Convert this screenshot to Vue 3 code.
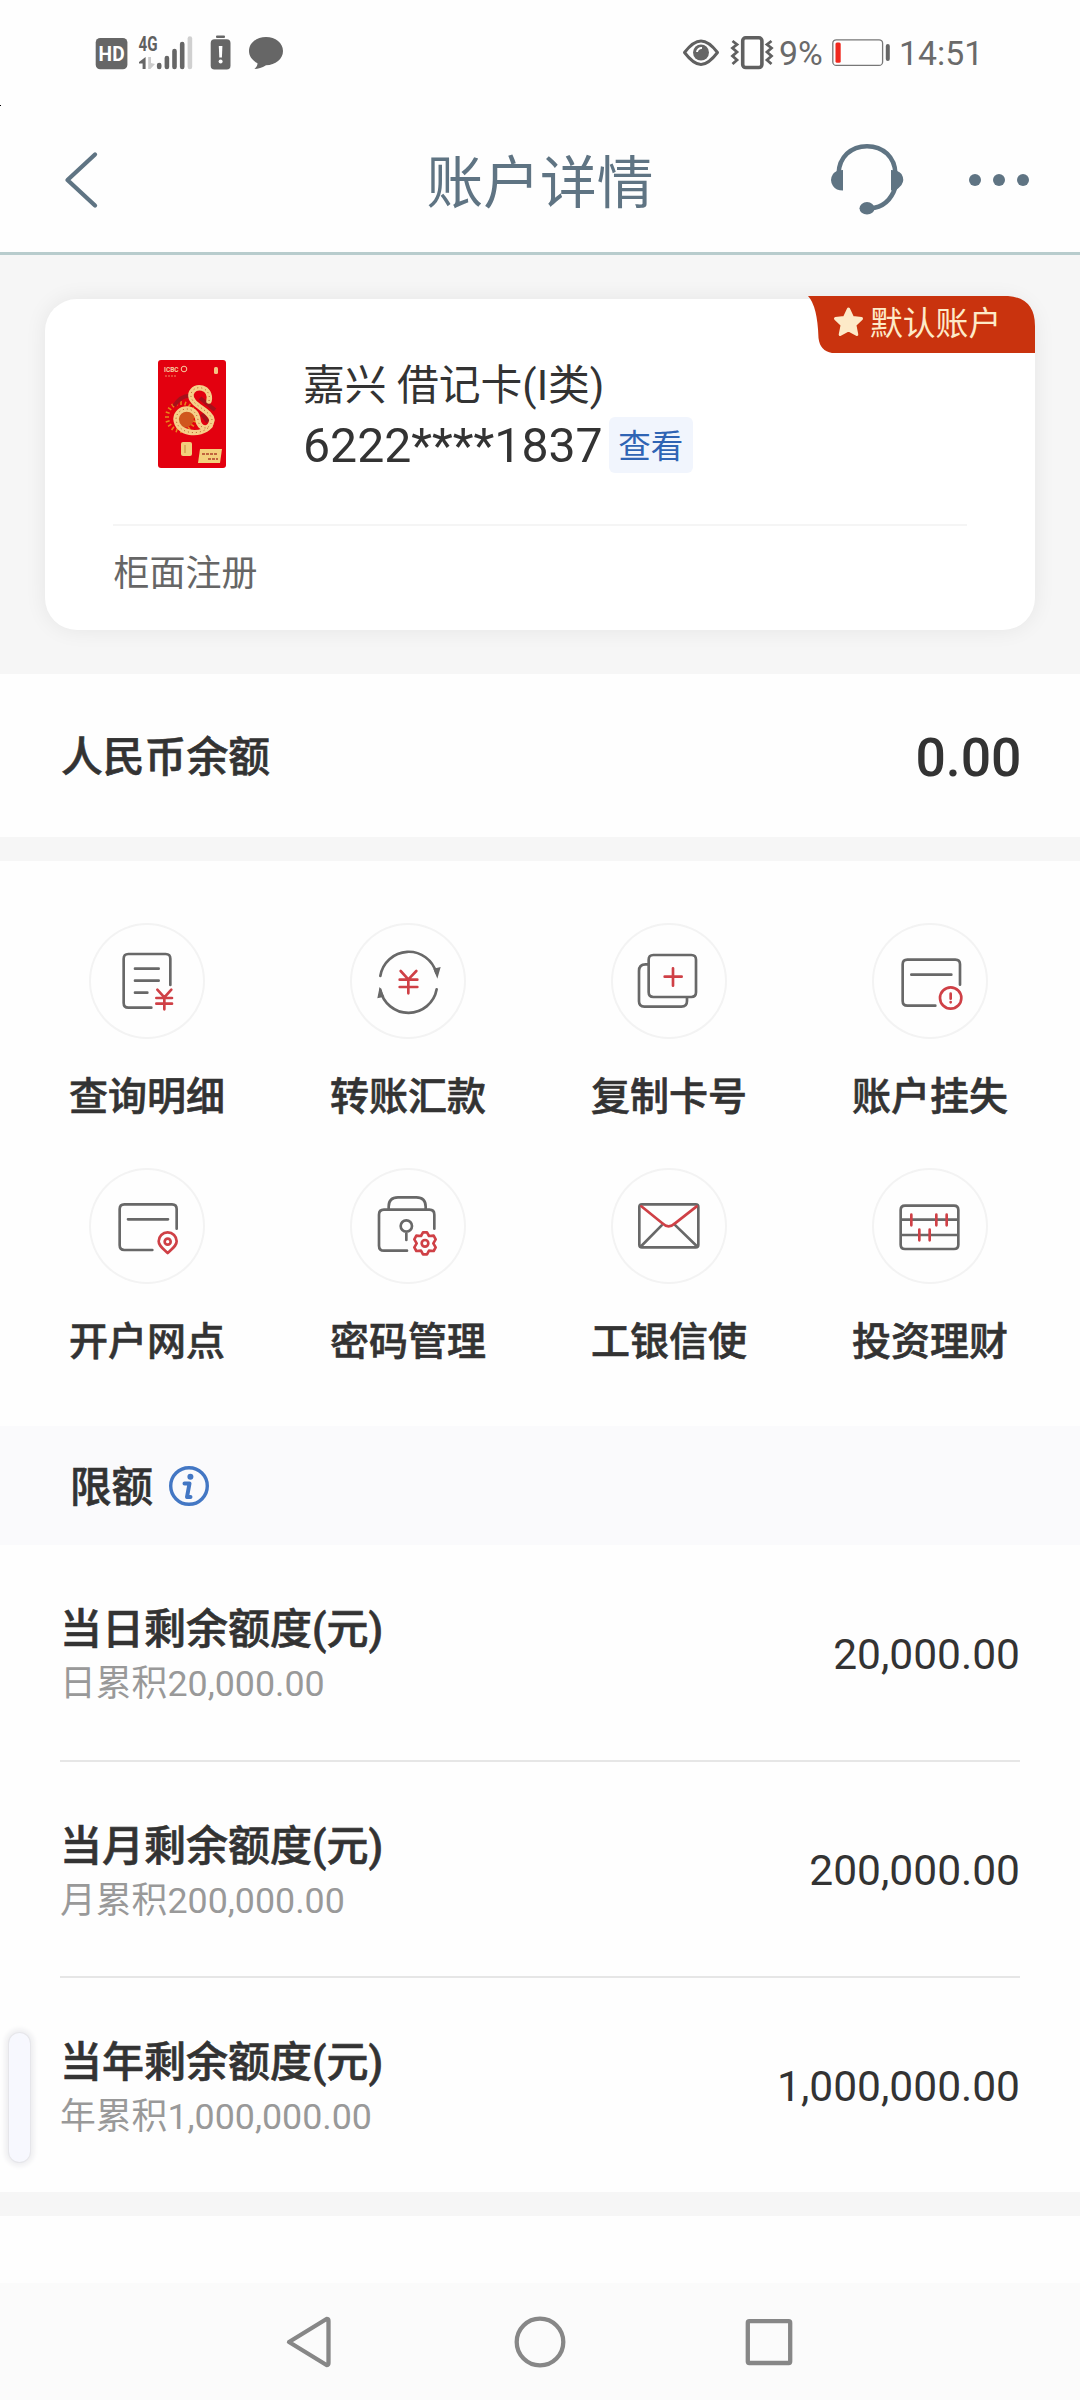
<script setup>
const actions = [
  {
    label: '查询明细', box: '148 68 348 348',
    dark: 'M392 254V175q0-14-14-14H266q-14 0-14 14V308q0 14 14 14H335M286 205H357M286 241H357M286 277H323',
    red: 'M353 268L374 291L395 268M350 293H397M350 310H397M374 291V327',
  },
  {
    label: '转账汇款', box: '931 68 348 348',
    dark: 'M1022 227A86 86 0 0 1 1190 218M1191 267A86 86 0 0 1 1022 268',
    fill: 'M1181 205L1203 200L1193 235ZM1020 259L1013 294L1034 289Z',
    red: 'M1083 212L1106 237L1130 212M1080 238H1133M1080 260H1133M1106 237V279',
  },
  {
    label: '复制卡号', box: '154 68 348 348',
    dark: 'M281 164H395q14 0 14 14V276q0 14-14 14H281q-14 0-14-14V178q0-14 14-14ZM267 192H258q-20 0-20 20V303q0 16 16 16H365q17 0 17-17V290',
    red: 'M315 229H366M340 204V256',
  },
  {
    label: '账户挂失', box: '937 68 348 348',
    dark: 'M1201 253V192q0-14-14-14H1043q-14 0-14 14V302q0 14 14 14H1127M1055 223H1175',
    red: 'M1205 293A32 32 0 1 1 1141 293A32 32 0 1 1 1205 293ZM1173 280V295M1173 305V306',
  },
  {
    label: '开户网点', box: '148 54 348 348',
    dark: 'M411 236V177q0-14-14-14H254q-14 0-14 14V286q0 14 14 14H338M265 208H385',
    red: 'M384 309C368 294 357 287 357 274A27 27 0 0 1 411 274C411 287 400 294 384 309ZM393 275A9 9 0 1 1 375 275A9 9 0 1 1 393 275Z',
  },
  {
    label: '密码管理', box: '931 54 348 348',
    dark: 'M1184 236V194q0-15-15-15H1033q-15 0-15 15V287q0 15 15 15H1102M1047 178V170q0-28 28-28H1130q28 0 28 28V178M1117 228A17 17 0 1 1 1083 228A17 17 0 1 1 1117 228ZM1100 245V270',
    red: 'M1150 247H1162L1168 258L1182 257L1188 268L1181 280L1188 292L1182 303L1168 302L1162 313H1150L1144 302L1130 303L1124 292L1131 280L1124 268L1130 257L1144 258ZM1166 280A10 10 0 1 1 1146 280A10 10 0 1 1 1166 280Z',
  },
  {
    label: '工银信使', box: '154 54 348 348',
    dark: 'M247 163H408q8 0 8 8V284q0 8-8 8H247q-8 0-8-8V171q0-8 8-8ZM245 288L306 226M345 224L411 288',
    red: 'M245 169L308 220Q327 238 346 220L411 169',
  },
  {
    label: '投资理财', box: '937 54 348 348',
    dark: 'M1036 167H1183q13 0 13 13V284q0 13-13 13H1036q-13 0-13-13V180q0-13 13-13ZM1023 209H1196M1023 255H1196',
    red: 'M1055 194V226M1130 194V226M1161 194V226M1079 239V271M1110 239V271',
  },
]

const limits = [
  { title: '当日剩余额度(元)', sub: '日累积20,000.00', value: '20,000.00' },
  { title: '当月剩余额度(元)', sub: '月累积200,000.00', value: '200,000.00' },
  { title: '当年剩余额度(元)', sub: '年累积1,000,000.00', value: '1,000,000.00' },
]

const rays = Array.from({ length: 20 }, (_, i) => i * 18)
</script>

<template>
  <div class="screen">
    <i class="speck"></i>
    <header class="status">
      <svg class="status-left" width="200" height="40" viewBox="90 32 200 40">
        <rect x="95.7" y="38" width="31.7" height="31.3" rx="4.5" fill="#666" />
        <text x="111.6" y="61.3" class="hd" text-anchor="middle" textLength="26" lengthAdjust="spacingAndGlyphs">HD</text>
        <text x="138.5" y="51" class="net" textLength="19" lengthAdjust="spacingAndGlyphs">4G</text>
        <path d="M145.6 57V69H142.6V63.5H139V62Z" fill="#666" />
        <path d="M148.2 57V69H150.4L155 64L151 63V57Z" fill="#ccc" />
        <g stroke="#666" stroke-width="4.6" stroke-linecap="round">
          <path d="M159.2 65V67M166.9 58V67M174.5 51V67M182.2 44V67" />
          <path d="M189.9 38.5V67" stroke="#d0d0d0" />
        </g>
        <rect x="210.7" y="39.3" width="19.8" height="30.2" rx="3.8" fill="#666" />
        <rect x="216" y="35.5" width="9" height="2.4" rx="1" fill="#666" />
        <path d="M218.8 46H222.4L221.9 57.5H219.3Z" fill="#fff" />
        <circle cx="220.6" cy="61.5" r="2" fill="#fff" />
        <path d="M266 37C275.500 37 283 43 283 51C283 59 275.500 65 266 65.300C262 68 258 69 254.500 69C256.500 67 257.500 65.500 257.500 63.200C252.500 60.500 249 56.500 249 51C249 43 256.500 37 266 37Z" fill="#666" />
      </svg>
      <svg width="94" height="40" viewBox="681 32 94 40" fill="none" stroke="#606060">
        <path d="M684.500 52.500C691 44 695.500 41 701 41S711 44 717.500 52.500C711 61 706.500 64.500 701 64.500S691 61 684.500 52.500Z" stroke-width="3" stroke-linejoin="round" />
        <circle cx="701" cy="52.500" r="8" fill="#666" stroke="none" />
        <path d="M697 52A4.500 4.500 0 0 1 702 48" stroke="#fff" stroke-width="2" />
        <rect x="742.700" y="37.800" width="19.200" height="29.700" rx="3" stroke-width="3.600" />
        <path d="M732.500 41L737 44.500L732.500 48L737 52L732.500 56L737 60L732.500 64M771.500 41L767 44.500L771.500 48L767 52L771.500 56L767 60L771.500 64" stroke-width="2.800" />
      </svg>
      <span class="status-text percent">9%</span>
      <svg class="battery" width="60" height="40" viewBox="831 32 60 40">
        <rect x="832.800" y="39.800" width="49.800" height="25.600" rx="3.500" fill="none" stroke="#777" stroke-width="1.300" />
        <rect x="835.500" y="42.500" width="5.200" height="20.300" rx="1.500" fill="#f0281e" />
        <rect x="885.800" y="44" width="4" height="17" rx="2" fill="#666" />
      </svg>
      <span class="status-text clock">14:51</span>
    </header>

    <nav class="title-bar">
      <svg class="back" width="40" height="64" viewBox="61 148 40 64" fill="none" stroke="#5f7483" stroke-width="4.300" stroke-linecap="round" stroke-linejoin="round">
        <path d="M95 154.500L67.500 180L95 205.500" />
      </svg>
      <h1>账户详情</h1>
      <div class="tools">
        <svg width="76" height="76" viewBox="829 142 76 76">
          <path d="M838.500 174C839 157 851 146.200 867 146.200S895 157 895.500 174M895.500 187Q889 207 870 208.500" fill="none" stroke="#5f7483" stroke-width="4.500" />
          <path d="M843 170V190.500Q836 190.500 833 186Q829 180 833 174Q836 170 843 170ZM891 170V190.500L896 190Q899 188 901.500 185Q905 180 901.500 174Q898 170 891 170Z" fill="#5f7483" />
          <ellipse cx="867" cy="208.300" rx="7.500" ry="6.200" fill="#5f7483" />
        </svg>
        <div class="more"><i></i><i></i><i></i></div>
      </div>
    </nav>

    <section class="card-zone">
      <article class="card">
        <div class="ribbon">
          <svg width="227" height="57" viewBox="0 0 227 57">
            <path d="M0 0H200Q227 2 227 30V57H24Q12 55 10.500 42Q9.500 10 0 0Z" fill="#c9330e" />
            <path d="M40.500 13L44.600 21.600L53.500 22.600L46.900 29L48.800 38.500L40.500 34L32.200 38.500L34.100 29L27.500 22.600L36.400 21.600Z" fill="#fdeac8" stroke="#fdeac8" stroke-width="3" stroke-linejoin="round" />
          </svg>
          <span>默认账户</span>
        </div>
        <div class="card-main">
          <svg class="card-art" width="68" height="108" viewBox="0 0 68 108">
            <rect width="68" height="108" rx="3" fill="#e3000f" />
            <g stroke="#e8871c" stroke-width="1.500">
              <path v-for="r in rays" :key="r" d="M23 45V41" :transform="`rotate(${r} 23 57)`" />
            </g>
            <circle cx="26" cy="58" r="10" fill="#d0561c" />
            <path d="M34 36Q24 34 16 46M42 38L57 50M44 54L50 62" stroke="#a5101a" stroke-width="4" fill="none" />
            <path d="M51 41C54 27 36 23 33 34C31 45 53 50 54 60C52 72 41 69 40 60C38 45 19 46 18 59C19 74 42 77 52 66" fill="none" stroke="#f5cf88" stroke-width="5.500" stroke-linecap="round" />
            <path d="M51 41C54 27 36 23 33 34C31 45 53 50 54 60C52 72 41 69 40 60C38 45 19 46 18 59C19 74 42 77 52 66" fill="none" stroke="#b5622a" stroke-width="1" stroke-dasharray="1 3" />
            <text x="6" y="11.500" class="art-text">ICBC</text>
            <circle cx="26" cy="9" r="2.800" fill="none" stroke="#f7cda0" />
            <path d="M7 16H19" stroke="#ee8a60" stroke-dasharray="2 1" />
            <rect x="56" y="7" width="4" height="7" rx="1.500" fill="#f3c483" />
            <rect x="23" y="82" width="11" height="14" rx="2" fill="#f3d07c" />
            <path d="M27 85V93" stroke="#c68a3a" />
            <path d="M42 89H64L62 103H40Z" fill="#f3d07c" />
            <path d="M44 94H59M50 99H60" stroke="#b0402a" stroke-width="1.500" stroke-dasharray="3 1" />
          </svg>
          <div class="card-info">
            <div class="card-name">嘉兴 借记卡(I类)</div>
            <div class="card-number"><span>6222****1837</span><button>查看</button></div>
          </div>
        </div>
        <div class="card-foot">柜面注册</div>
      </article>
    </section>

    <section class="balance">
      <span>人民币余额</span>
      <strong>0.00</strong>
    </section>

    <section class="actions">
      <div v-for="a in actions" :key="a.label" class="action">
        <div class="bubble">
          <svg width="116" height="116" :viewBox="a.box" fill="none" stroke-width="8" stroke-linecap="round" stroke-linejoin="round">
            <path :d="a.dark" stroke="#686868" />
            <path v-if="a.fill" :d="a.fill" fill="#686868" />
            <path :d="a.red" stroke="#cf4046" />
          </svg>
        </div>
        <span>{{ a.label }}</span>
      </div>
    </section>

    <section class="limit-head">
      <span>限额</span>
      <svg width="42" height="42" viewBox="0 0 42 42">
        <circle cx="21" cy="21" r="18.300" fill="none" stroke="#4377c4" stroke-width="3.400" />
        <circle cx="22.400" cy="11.700" r="3" fill="#4377c4" />
        <path d="M16.500 18.500H21.500L19 32H22.500" fill="none" stroke="#4377c4" stroke-width="4" stroke-linecap="round" stroke-linejoin="round" />
      </svg>
    </section>

    <section class="limits">
      <div v-for="l in limits" :key="l.title" class="limit">
        <div>
          <div class="limit-title">{{ l.title }}</div>
          <div class="limit-sub">{{ l.sub }}</div>
        </div>
        <div class="limit-value">{{ l.value }}</div>
      </div>
    </section>

    <div class="blank"></div>

    <footer class="system-nav">
      <svg width="52" height="56" viewBox="282 2314 52 56" fill="none" stroke="#878787" stroke-width="4.300" stroke-linejoin="round">
        <path d="M289 2342L326.500 2319Q328.500 2319 328.500 2321V2363Q328.500 2365 326.500 2365Z" />
      </svg>
      <svg width="52" height="56" viewBox="514 2314 52 56" fill="none" stroke="#878787" stroke-width="4.300">
        <circle cx="540" cy="2342" r="23.300" />
      </svg>
      <svg width="52" height="56" viewBox="743 2314 52 56" fill="none" stroke="#878787" stroke-width="4.300">
        <rect x="747.800" y="2321.200" width="42.400" height="41.800" rx="1.500" />
      </svg>
    </footer>

    <i class="edge-handle"></i>
  </div>
</template>

<style>
html,
body {
  margin: 0;
  background: #fefefe;
}
</style>

<style scoped>
.screen {
  position: relative;
  display: flex;
  flex-direction: column;
  width: 1080px;
  height: 2400px;
  overflow: hidden;
  background: #fefefe;
  color: #333;
  font-family: Roboto, "Noto Sans CJK SC", sans-serif;
}
.speck {
  position: absolute;
  left: 0;
  top: 105px;
  width: 1px;
  height: 1px;
  background: #000;
}
.status {
  display: flex;
  align-items: center;
  height: 104px;
  padding: 0 0 0 90px;
  box-sizing: border-box;
}
.status-left {
  margin-right: 391px;
}
.hd {
  font: 700 20.5px Roboto, sans-serif;
  fill: #fff;
}
.net {
  font: 700 20px Roboto, sans-serif;
  fill: #606060;
}
.status-text {
  color: #6a6a6a;
  font-size: 33.800px;
  line-height: 40px;
  margin-top: 4px;
}
.percent {
  width: 52px;
  margin-left: 4px;
}
.clock {
  margin-left: 8px;
}
.title-bar {
  display: flex;
  align-items: center;
  justify-content: space-between;
  height: 151px;
  box-sizing: border-box;
  padding: 4px 51px 0 61px;
  border-bottom: 3px solid #b8cccd;
}
.title-bar h1 {
  margin: 8px 0 0 150px;
  font-size: 56.700px;
  font-weight: 400;
  line-height: 80px;
  color: #5f7483;
}
.tools {
  display: flex;
  align-items: center;
  gap: 64px;
}
.more {
  display: flex;
  gap: 12px;
}
.more i {
  width: 12px;
  height: 12px;
  border-radius: 50%;
  background: #5f7483;
}
.card-zone {
  height: 419px;
  box-sizing: border-box;
  padding: 44px 45px 0 44.500px;
  background: #f6f6f6;
}
.card {
  position: relative;
  height: 331px;
  border-radius: 32px;
  background: #fff;
  box-shadow: 0 0 22px rgba(0, 0, 0, 0.07);
}
.ribbon {
  position: absolute;
  right: 0;
  top: -3px;
  width: 227px;
  height: 57px;
}
.ribbon span {
  position: absolute;
  left: 62px;
  top: 4px;
  font-size: 32.800px;
  line-height: 48px;
  color: #fdeac8;
}
.card-main {
  display: flex;
  height: 225px;
  margin: 0 68px;
  border-bottom: 2px solid #f5f5f5;
}
.card-art {
  margin: 61px 77px 0 45.500px;
}
.art-text {
  font: 700 6.500px Roboto, sans-serif;
  fill: #f7cda0;
}
.card-info {
  padding-top: 57px;
}
.card-name {
  font-size: 41.800px;
  line-height: 60px;
}
.card-number {
  display: flex;
  align-items: center;
  height: 60px;
  font-size: 48.200px;
  line-height: 60px;
}
.card-number button {
  margin: -3px 0 0 6px;
  padding: 5px 0 0;
  width: 84px;
  height: 56px;
  box-sizing: border-box;
  border: 0;
  border-radius: 6px;
  background: #f1f5fd;
  color: #2f64b4;
  font: 400 32.500px/50px Roboto, "Noto Sans CJK SC", sans-serif;
}
.card-foot {
  margin: 20px 69px 0;
  font-size: 36px;
  line-height: 56px;
  color: #666;
}
.balance {
  display: flex;
  align-items: center;
  justify-content: space-between;
  height: 163px;
  padding: 0 58.500px 0 61px;
  border-bottom: 24px solid #f6f6f6;
  font-size: 41.800px;
  font-weight: 500;
}
.balance span {
  margin-top: -3px;
  -webkit-text-stroke: 0.6px #333;
}
.balance strong {
  margin-top: 3px;
  font-size: 53.500px;
  font-weight: 500;
}
.actions {
  display: grid;
  grid-template-columns: repeat(4, 261px);
  grid-auto-rows: 245px;
  height: 565px;
  padding: 62px 0 0 16.500px;
  box-sizing: border-box;
}
.action {
  display: flex;
  flex-direction: column;
  align-items: center;
  font-size: 39px;
  font-weight: 500;
  line-height: 56px;
  -webkit-text-stroke: 0.6px #333;
}
.bubble {
  width: 116px;
  height: 116px;
  margin-bottom: 30px;
  border-radius: 50%;
  box-shadow: inset 0 0 0 2px #f3f3f3;
}
.bubble svg {
  display: block;
}
.limit-head {
  display: flex;
  align-items: center;
  height: 119px;
  padding-left: 70px;
  background: #fafafc;
  font-size: 41.500px;
  font-weight: 500;
}
.limit-head span {
  margin-top: -3px;
  -webkit-text-stroke: 0.6px #333;
}
.limit-head svg {
  margin-left: 15px;
}
.limits {
  padding: 0 60px;
  border-bottom: 24px solid #f6f6f6;
}
.limit {
  display: flex;
  align-items: center;
  justify-content: space-between;
  height: 214px;
  border-bottom: 2px solid #e6e6e6;
}
.limit:first-child {
  height: 215px;
}
.limit:last-child {
  border-bottom: 0;
}
.limit-title {
  margin-top: 5px;
  font-size: 42px;
  font-weight: 500;
  line-height: 58px;
  -webkit-text-stroke: 0.6px #333;
}
.limit-sub {
  font-size: 35.800px;
  line-height: 50px;
  color: #999;
}
.limit-value {
  margin-top: 3px;
  font-size: 42.500px;
}
.blank {
  flex: 1;
}
.system-nav {
  display: flex;
  height: 117px;
  box-sizing: border-box;
  padding: 31px 0 0 282px;
  background: #fbfbfb;
}
.system-nav svg {
  margin-right: 180px;
}
.system-nav svg:nth-child(2) {
  margin-right: 177px;
}
.edge-handle {
  position: absolute;
  left: 9px;
  top: 2033px;
  width: 21px;
  height: 129px;
  border-radius: 11px;
  background: #f7f8fe;
  box-shadow: 0 0 0 1px #e6e6ea, 0 0 5px 4px #eeeef0;
}
</style>
